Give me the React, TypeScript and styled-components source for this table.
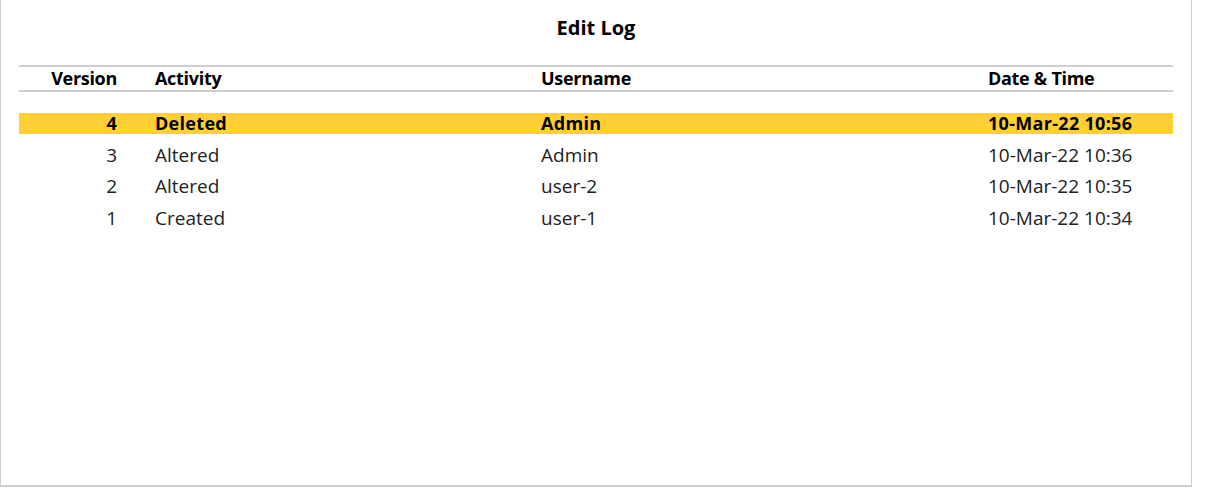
import React from "react";
import styled, { createGlobalStyle } from "styled-components";

const Global = createGlobalStyle`
  html, body { margin: 0; padding: 0; background: #fff; }
  body { font-family: "Open Sans", "Noto Sans", sans-serif; color: #1a1a1a; }
`;

const Panel = styled.div`
  width: 1192px;
  height: 487px;
  box-sizing: border-box;
  border-left: 1px solid #cfcfcf;
  border-right: 1px solid #cfcfcf;
  border-bottom: 2px solid #cfcfcf;
  padding: 14px 18px 0 18px;
  display: flex;
  flex-direction: column;
`;

const Title = styled.h1`
  margin: 0;
  font-size: 20px;
  font-weight: 700;
  text-align: center;
  color: #000;
  line-height: 28px;
`;

const Table = styled.div`
  margin-top: 23px;
  display: flex;
  flex-direction: column;
`;

const cols = `136px 386px 447px 1fr`;

const HeaderRow = styled.div`
  display: grid;
  grid-template-columns: ${cols};
  border-top: 2px solid #cfcfcf;
  border-bottom: 2px solid #cfcfcf;
  height: 27px;
  box-sizing: border-box;
  align-items: center;
  font-weight: 700;
  font-size: 18px;
  letter-spacing: -0.3px;
  color: #000;
`;

const Body = styled.div`
  display: flex;
  flex-direction: column;
  gap: 10.5px;
  margin-top: 21px;
`;

const Row = styled.div<{ $active?: boolean }>`
  display: grid;
  grid-template-columns: ${cols};
  height: 21px;
  align-items: center;
  background: ${(p) => (p.$active ? "#ffcf33" : "transparent")};
  font-weight: ${(p) => (p.$active ? 700 : 400)};
  font-size: ${(p) => (p.$active ? "18px" : "19px")};
  letter-spacing: ${(p) => (p.$active ? "0.3px" : "0")};
  color: ${(p) => (p.$active ? "#000" : "#222")};
`;

const Cell = styled.div<{ $num?: boolean }>`
  line-height: 21px;
  white-space: nowrap;
  text-align: ${(p) => (p.$num ? "right" : "left")};
  padding-right: ${(p) => (p.$num ? "38px" : "0")};
`;

const rows = [
  { v: 4, a: "Deleted", u: "Admin", d: "10-Mar-22 10:56", active: true },
  { v: 3, a: "Altered", u: "Admin", d: "10-Mar-22 10:36" },
  { v: 2, a: "Altered", u: "user-2", d: "10-Mar-22 10:35" },
  { v: 1, a: "Created", u: "user-1", d: "10-Mar-22 10:34" },
];

export default function App() {
  return (
    <>
      <Global />
      <Panel>
        <Title>Edit Log</Title>
        <Table>
          <HeaderRow>
            <Cell $num>Version</Cell>
            <Cell>Activity</Cell>
            <Cell>Username</Cell>
            <Cell>Date &amp; Time</Cell>
          </HeaderRow>
          <Body>
            {rows.map((r) => (
              <Row key={r.v} $active={r.active}>
                <Cell $num>{r.v}</Cell>
                <Cell>{r.a}</Cell>
                <Cell>{r.u}</Cell>
                <Cell>{r.d}</Cell>
              </Row>
            ))}
          </Body>
        </Table>
      </Panel>
    </>
  );
}
